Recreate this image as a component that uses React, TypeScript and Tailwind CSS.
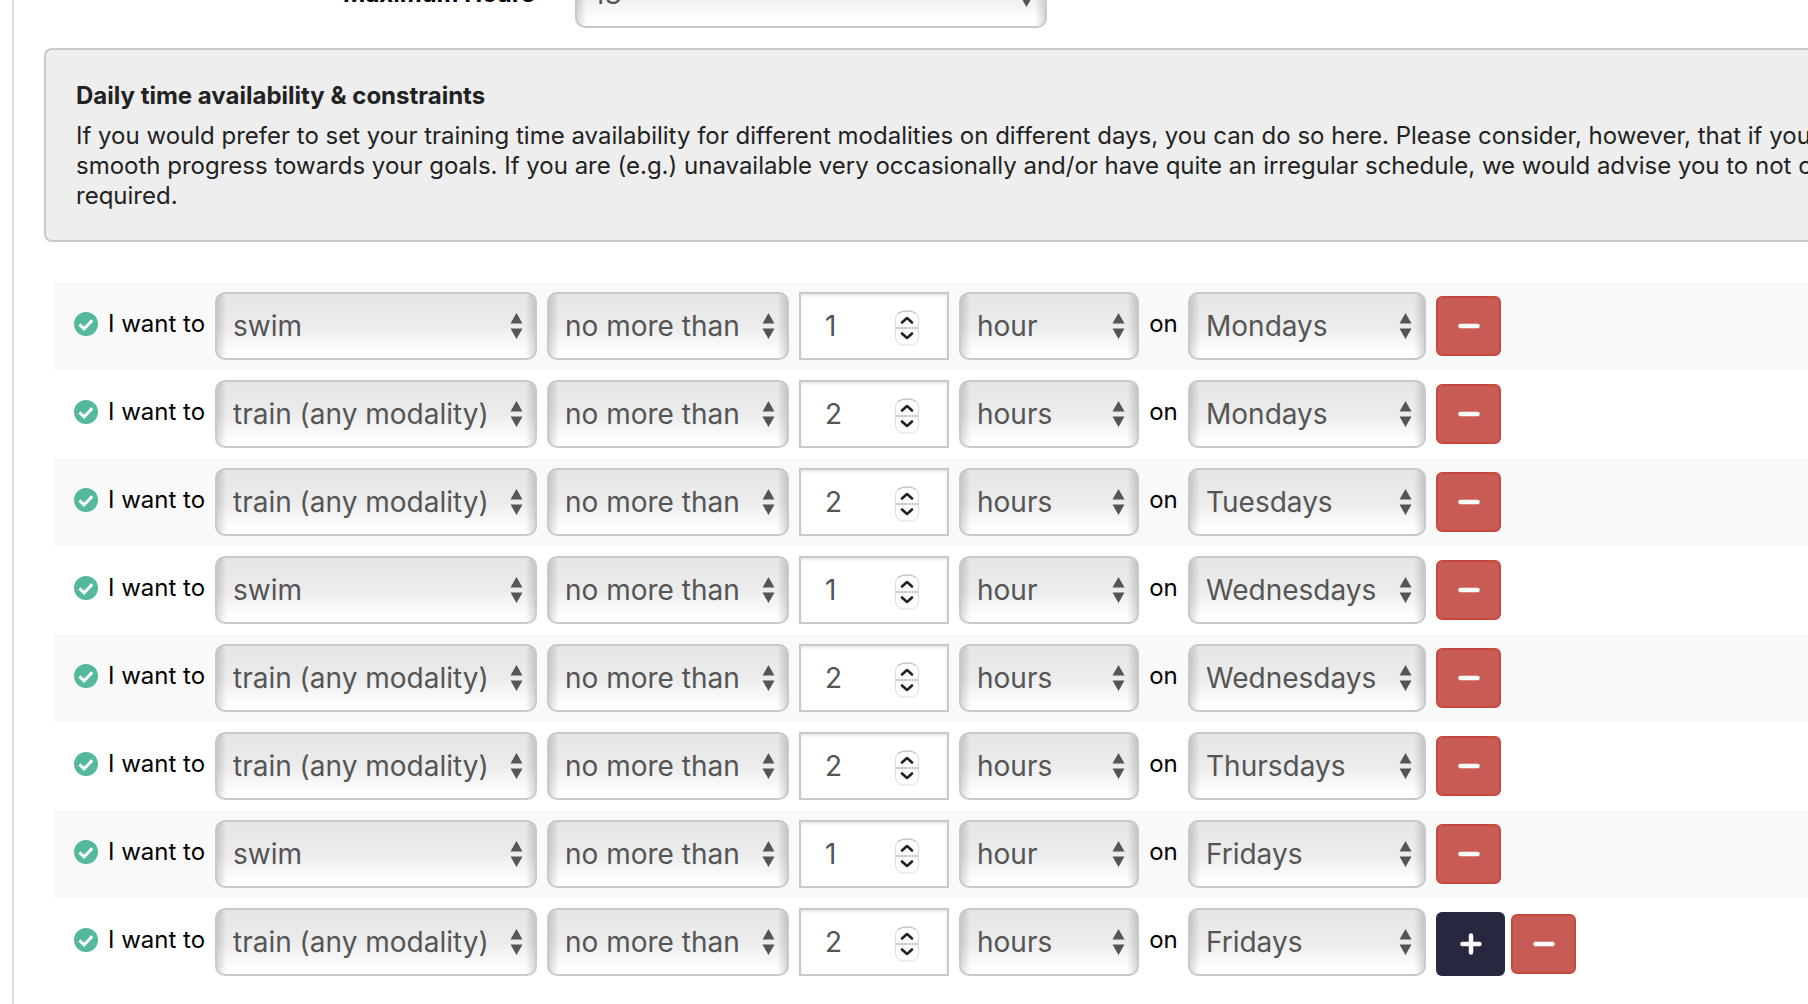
import React, { useState } from 'react';

type Rule = {
  activity: string;
  amount: number;
  day: string;
};

const initialRules: Rule[] = [
  { activity: 'swim', amount: 1, day: 'Mondays' },
  { activity: 'train (any modality)', amount: 2, day: 'Mondays' },
  { activity: 'train (any modality)', amount: 2, day: 'Tuesdays' },
  { activity: 'swim', amount: 1, day: 'Wednesdays' },
  { activity: 'train (any modality)', amount: 2, day: 'Wednesdays' },
  { activity: 'train (any modality)', amount: 2, day: 'Thursdays' },
  { activity: 'swim', amount: 1, day: 'Fridays' },
  { activity: 'train (any modality)', amount: 2, day: 'Fridays' },
];

const activities = ['train (any modality)', 'swim', 'bike', 'run'];
const limits = ['no more than', 'at least', 'exactly'];
const days = ['Mondays', 'Tuesdays', 'Wednesdays', 'Thursdays', 'Fridays', 'Saturdays', 'Sundays'];
const maxHours = ['10', '12', '15', '18', '20'];

interface SelectProps {
  id?: string;
  label?: string;
  className: string;
  options: string[];
  value: string;
  onChange: (value: string) => void;
}

const Select: React.FC<SelectProps> = ({ id, label, className, options, value, onChange }) => (
  <div className={`relative shrink-0 ${className}`}>
    <select
      id={id}
      aria-label={label}
      value={value}
      onChange={(e) => onChange(e.target.value)}
      className="block h-[68px] w-full appearance-none rounded-[10px] border-2 border-[#c9c9c9] bg-[linear-gradient(to_right,rgba(0,0,0,0.15),transparent_10px,transparent_calc(100%-10px),rgba(0,0,0,0.15)),linear-gradient(#e6e6e6,#ececec_50%,#fff_92%)] pt-0.5 pl-4 text-[28px] text-[#555]"
    >
      {options.map((option) => (
        <option key={option} value={option}>
          {option}
        </option>
      ))}
    </select>
    <svg className="pointer-events-none absolute top-[21px] right-[14px]" width="13" height="26" viewBox="0 0 13 26" fill="#555">
      <path d="M6.5 0 12.5 10.5H.5z" />
      <path d="M6.5 26 12.5 15.5H.5z" />
    </svg>
  </div>
);

const Stepper: React.FC<{ value: number; onChange: (value: number) => void }> = ({ value, onChange }) => (
  <div className="relative w-[150px] shrink-0">
    <input
      type="number"
      aria-label="Amount"
      min={0}
      value={value}
      onChange={(e) => onChange(Number(e.target.value))}
      className="block h-[68px] w-full border-2 border-[#c9c9c9] bg-white pl-6 text-[28px] text-[#555] shadow-[inset_0_2px_3px_#e8e8e8] [appearance:textfield] [&::-webkit-inner-spin-button]:appearance-none"
    />
    <svg className="pointer-events-none absolute top-[18px] right-[29px]" width="26" height="36" viewBox="0 0 26 36" fill="none">
      <rect x="1.5" y="1" width="23" height="34" rx="8" fill="#fff" stroke="#dedede" />
      <path d="M4 4Q7 1 13 1T22 4" stroke="#bdbdbd" />
      <path d="M2 18H24" stroke="#d0d0d0" strokeWidth="2" />
      <path d="M8 12.5 13 8 18 12.5M8 23.5 13 28 18 23.5" stroke="#222" strokeWidth="2.6" strokeLinecap="round" strokeLinejoin="round" />
    </svg>
  </div>
);

const CheckIcon = () => (
  <svg className="shrink-0" width="24" height="24" viewBox="0 0 24 24" fill="none">
    <circle cx="12" cy="12" r="12" fill="#55b79b" />
    <path d="M5.5 12.5 10 16.8 18.3 8.4" stroke="#fff" strokeWidth="3" />
  </svg>
);

const App: React.FC = () => {
  const [rules, setRules] = useState(initialRules);
  const [hours, setHours] = useState('18');
  const [limit, setLimit] = useState('no more than');

  const update = (index: number, patch: Partial<Rule>) =>
    setRules(rules.map((rule, i) => (i === index ? { ...rule, ...patch } : rule)));

  const remove = (index: number) => setRules(rules.filter((_, i) => i !== index));

  return (
    <div className="min-h-screen overflow-hidden bg-white pl-3 font-['Inter',sans-serif] text-2xl text-black">
      <main className="min-h-screen border-l-2 border-[#dcdcdc] pb-[18px]">
        <div className="-mt-10 flex h-[68px] items-center">
          <label htmlFor="max-hours" className="w-[521px] text-right font-bold">
            Maximum Hours
          </label>
          <Select id="max-hours" className="ml-10 w-[472px]" options={maxHours} value={hours} onChange={setHours} />
        </div>

        <section className="mt-5 ml-[30px] overflow-hidden rounded-l-lg border-2 border-r-0 border-[#c9c9c9] bg-[#eee] pt-[31px] pb-[29px] pl-[30px] whitespace-nowrap text-[#222]">
          <h2 className="mb-2.5 leading-[30px] font-bold">Daily time availability &amp; constraints</h2>
          <p className="leading-[30px]">
            If you would prefer to set your training time availability for different modalities on different days, you can do so here. Please consider, however, that if you
            <br />
            smooth progress towards your goals. If you are (e.g.) unavailable very occasionally and/or have quite an irregular schedule, we would advise you to not c
            <br />
            required.
          </p>
        </section>

        <ul className="mt-10 ml-10">
          {rules.map((rule, i) => (
            <li key={i} className="flex h-[88px] items-center pl-5 odd:bg-[#f9f9f9]">
              <div className="flex w-[141px] shrink-0 items-center gap-2.5 pb-1 whitespace-nowrap">
                <CheckIcon />
                <span>I want to</span>
              </div>
              <Select
                label="Activity"
                className="w-[322px]"
                options={activities}
                value={rule.activity}
                onChange={(activity) => update(i, { activity })}
              />
              <Select label="Limit" className="mx-2.5 w-[242px]" options={limits} value={limit} onChange={setLimit} />
              <Stepper value={rule.amount} onChange={(amount) => update(i, { amount })} />
              <Select
                label="Unit"
                className="ml-2.5 w-[180px]"
                options={rule.amount === 1 ? ['hour', 'minute'] : ['hours', 'minutes']}
                value={rule.amount === 1 ? 'hour' : 'hours'}
                onChange={() => {}}
              />
              <span className="w-[49px] shrink-0 pb-1 text-center">on</span>
              <Select label="Day" className="w-[238px]" options={days} value={rule.day} onChange={(day) => update(i, { day })} />
              <div className="ml-2.5 flex shrink-0 items-center gap-1.5">
                {i === rules.length - 1 && (
                  <button
                    aria-label="Add constraint"
                    onClick={() => setRules([...rules, rule])}
                    className="mt-1 flex h-16 w-[69px] items-center justify-center rounded-md bg-[#27283f]"
                  >
                    <svg width="22" height="22" viewBox="0 0 22 22" fill="none">
                      <path d="M2.5 11H19.5M11 2.5V19.5" stroke="#fff" strokeWidth="4.5" strokeLinecap="round" />
                    </svg>
                  </button>
                )}
                <button
                  aria-label="Remove constraint"
                  onClick={() => remove(i)}
                  className="flex h-[60px] w-[65px] items-center justify-center rounded-md border-2 border-[#c44a3d] bg-[#c85c54] last:not-first:mt-1"
                >
                  <svg width="22" height="22" viewBox="0 0 22 22" fill="none">
                    <path d="M2.5 11H19.5" stroke="#fff" strokeWidth="4.5" strokeLinecap="round" />
                  </svg>
                </button>
              </div>
            </li>
          ))}
        </ul>
      </main>
    </div>
  );
};

export default App;
